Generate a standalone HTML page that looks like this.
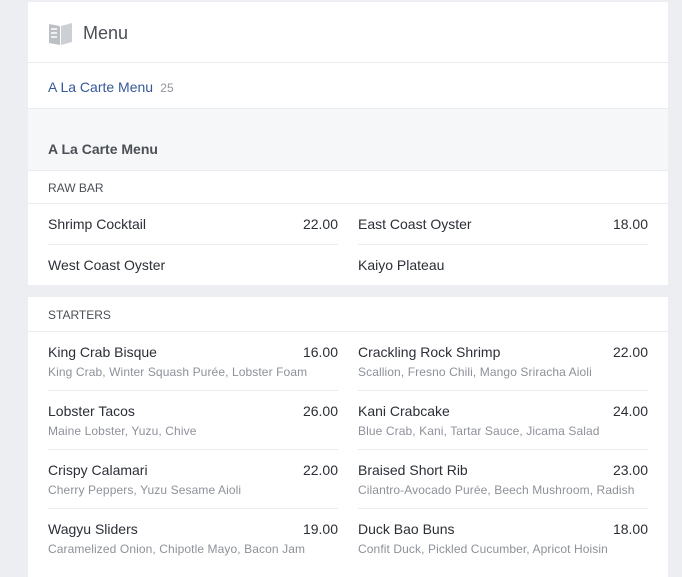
<!DOCTYPE html><html><head><style>
body{margin:0;width:682px;height:569px;overflow:hidden;background:#eceef1;font-family:"Liberation Sans",sans-serif;position:relative}
.a{position:absolute}
.card{position:absolute;left:28px;width:640px;background:#fff}
.t{position:absolute;white-space:nowrap}
.n{font-size:14px;color:#2b2f36}
.d{font-size:12px;color:#8d9199;letter-spacing:0.1px}
.p{font-size:14px;color:#2b2f36;text-align:right}
.hl{position:absolute;height:1px;background:#e9ebee}
</style></head><body>
<div class="card" style="top:2px;height:283px"></div>
<div class="hl" style="left:28px;width:640px;top:62px"></div>
<div class="a" style="left:28px;width:640px;top:108px;height:62px;background:#f6f7f9"></div>
<div class="hl" style="left:28px;width:640px;top:108px"></div>
<div class="hl" style="left:28px;width:640px;top:170px"></div>
<div class="hl" style="left:28px;width:640px;top:203px"></div>
<svg class="a" style="left:48px;top:22px" width="25" height="23" viewBox="0 0 25 23"><path d="M1 2 L12 4 L12 23 L1 21Z" fill="#bcc0c4"/><path d="M13 4 L24 1 L24 20 L13 23Z" fill="#ccd0d5"/><path d="M3 7h6M3 11h6M3 15h6" stroke="#fff" stroke-width="1.5"/></svg>
<div class="t" style="left:83px;top:23px;font-size:18px;color:#4b4f56">Menu</div>
<div class="t" style="left:48px;top:79px;font-size:14px;color:#365899">A La Carte Menu <span style="font-size:12px;color:#90949c">&nbsp;25</span></div>
<div class="t" style="left:48px;top:141px;font-size:14px;font-weight:bold;color:#4b4f56">A La Carte Menu</div>
<div class="t" style="left:48px;top:181px;font-size:12px;color:#4b4f56">RAW BAR</div>
<div class="t n" style="left:48px;top:216px">Shrimp Cocktail</div><div class="t p" style="right:344px;top:216px">22.00</div>
<div class="t n" style="left:358px;top:216px">East Coast Oyster</div><div class="t p" style="right:34px;top:216px">18.00</div>
<div class="hl" style="left:48px;width:290px;top:244px"></div><div class="hl" style="left:358px;width:290px;top:244px"></div>
<div class="t n" style="left:48px;top:257px">West Coast Oyster</div>
<div class="t n" style="left:358px;top:257px">Kaiyo Plateau</div>
<div class="card" style="top:297px;height:280px"></div>
<div class="t" style="left:48px;top:308px;font-size:12px;color:#4b4f56">STARTERS</div>
<div class="hl" style="left:28px;width:640px;top:331px"></div>

<div class="t n" style="left:48px;top:344px">King Crab Bisque</div><div class="t p" style="right:344px;top:344px">16.00</div>
<div class="t d" style="left:48px;top:365px">King Crab, Winter Squash Purée, Lobster Foam</div>
<div class="t n" style="left:358px;top:344px">Crackling Rock Shrimp</div><div class="t p" style="right:34px;top:344px">22.00</div>
<div class="t d" style="left:358px;top:365px">Scallion, Fresno Chili, Mango Sriracha Aioli</div>
<div class="hl" style="left:48px;width:290px;top:390px"></div><div class="hl" style="left:358px;width:290px;top:390px"></div>

<div class="t n" style="left:48px;top:403px">Lobster Tacos</div><div class="t p" style="right:344px;top:403px">26.00</div>
<div class="t d" style="left:48px;top:424px">Maine Lobster, Yuzu, Chive</div>
<div class="t n" style="left:358px;top:403px">Kani Crabcake</div><div class="t p" style="right:34px;top:403px">24.00</div>
<div class="t d" style="left:358px;top:424px">Blue Crab, Kani, Tartar Sauce, Jicama Salad</div>
<div class="hl" style="left:48px;width:290px;top:449px"></div><div class="hl" style="left:358px;width:290px;top:449px"></div>

<div class="t n" style="left:48px;top:462px">Crispy Calamari</div><div class="t p" style="right:344px;top:462px">22.00</div>
<div class="t d" style="left:48px;top:483px">Cherry Peppers, Yuzu Sesame Aioli</div>
<div class="t n" style="left:358px;top:462px">Braised Short Rib</div><div class="t p" style="right:34px;top:462px">23.00</div>
<div class="t d" style="left:358px;top:483px">Cilantro-Avocado Purée, Beech Mushroom, Radish</div>
<div class="hl" style="left:48px;width:290px;top:508px"></div><div class="hl" style="left:358px;width:290px;top:508px"></div>

<div class="t n" style="left:48px;top:521px">Wagyu Sliders</div><div class="t p" style="right:344px;top:521px">19.00</div>
<div class="t d" style="left:48px;top:542px">Caramelized Onion, Chipotle Mayo, Bacon Jam</div>
<div class="t n" style="left:358px;top:521px">Duck Bao Buns</div><div class="t p" style="right:34px;top:521px">18.00</div>
<div class="t d" style="left:358px;top:542px">Confit Duck, Pickled Cucumber, Apricot Hoisin</div>
</body></html>
